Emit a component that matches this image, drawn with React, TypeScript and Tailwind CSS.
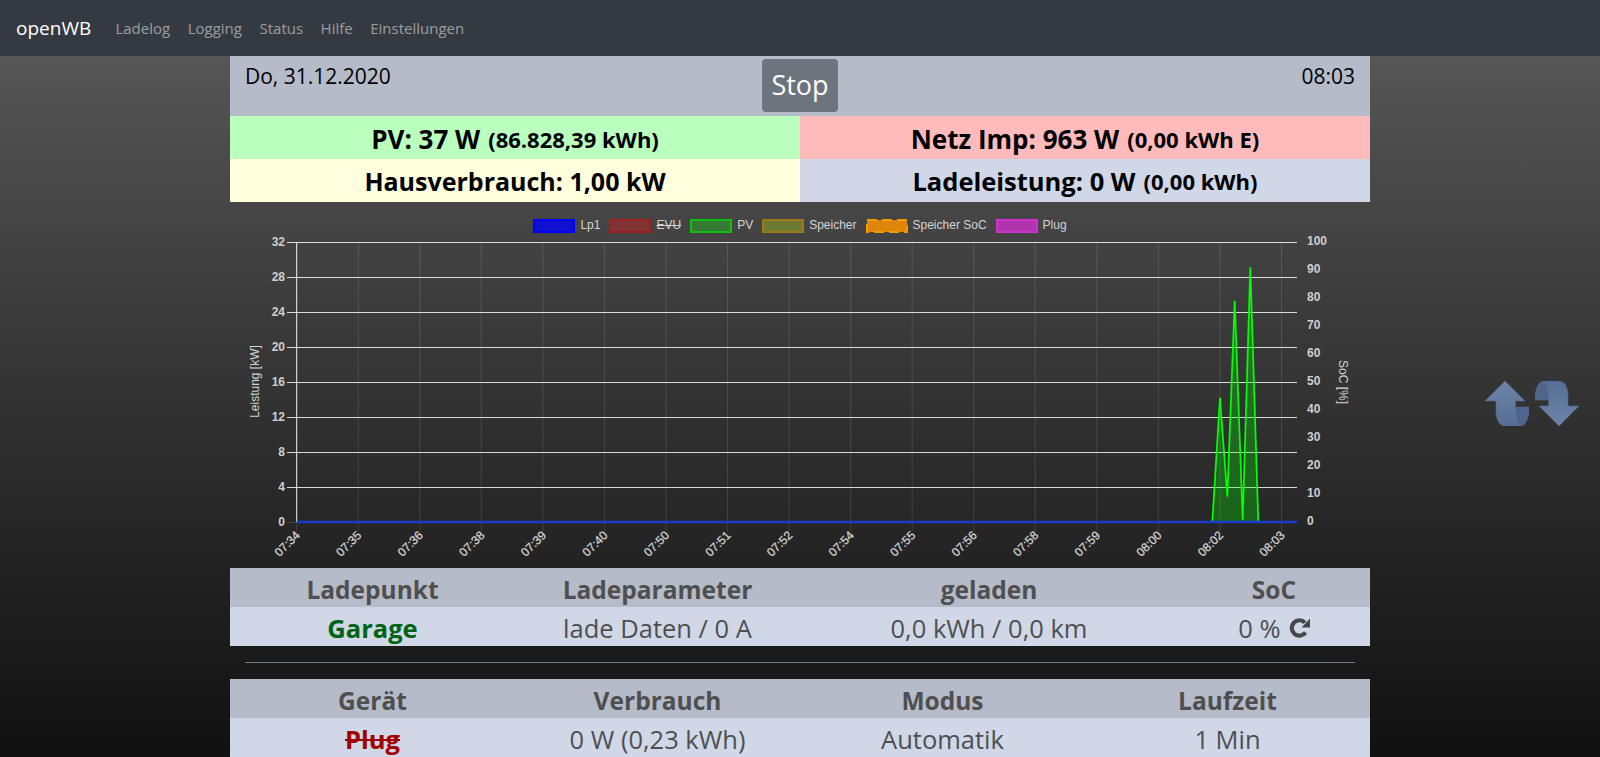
const navLinks = ["Ladelog", "Logging", "Status", "Hilfe", "Einstellungen"];

const legend = [
  { label: "Lp1", box: "bg-[#1010d0] border-[#0000ff]" },
  { label: "EVU", box: "bg-[#803434] border-[#a02020]", off: true },
  { label: "PV", box: "bg-[#347a34] border-[#10c010]" },
  { label: "Speicher", box: "bg-[#6c7a34] border-[#a07818]" },
  { label: "Speicher SoC", dashed: true, box: "" },
  { label: "Plug", box: "bg-[#b034ac] border-[#d030d0]" },
];

const xLabels = ["07:34", "07:35", "07:36", "07:38", "07:39", "07:40", "07:50", "07:51", "07:52", "07:54", "07:55", "07:56", "07:58", "07:59", "08:00", "08:02", "08:03"];
const leftLabels = [32, 28, 24, 20, 16, 12, 8, 4, 0];
const rightLabels = [100, 90, 80, 70, 60, 50, 40, 30, 20, 10, 0];

const pvLine = "1212.3,522 1220,397.7 1227.3,496.7 1234.7,300.7 1242.7,520 1250.3,267.3 1258.3,522";

function Chart() {
  return (
    <svg viewBox="230 233 1140 335" className="block h-[335px] w-full font-['Liberation_Sans',sans-serif]">
      {xLabels.map((t, i) => {
        const x = 296.7 + i * 61.55;
        return (
          <g key={t}>
            <line x1={x} x2={x} y1={242} y2={531} stroke="#ffffff" strokeOpacity={0.12} />
            <text x={x + 4} y={536} textAnchor="end" fontSize={12} fill="#d4d4d4" stroke="#d4d4d4" strokeWidth={0.25} transform={`rotate(-45 ${x + 4} 536)`}>
              {t}
            </text>
          </g>
        );
      })}
      {leftLabels.map((n, i) => {
        const y = 242.5 + i * 35;
        return (
          <g key={n}>
            <line x1={287} x2={1297} y1={y} y2={y} stroke="#ffffff" strokeOpacity={n === 0 ? 0.15 : 0.82} />
            <text x={285} y={y + 3} textAnchor="end" fontSize={12} fontWeight={700} fill="#cfcfcf">
              {n}
            </text>
          </g>
        );
      })}
      {rightLabels.map((n, i) => (
        <text key={n} x={1307} y={245 + i * 28} fontSize={12} fontWeight={700} fill="#cfcfcf">
          {n}
        </text>
      ))}
      <line x1={296.7} x2={296.7} y1={242} y2={522} stroke="#ffffff" strokeOpacity={0.9} />
      <polygon points={pvLine} fill="#00ff00" fillOpacity={0.28} />
      <polyline points={pvLine} fill="none" stroke="#00ff00" strokeWidth={1.75} />
      <line x1={296.7} x2={1297} y1={522} y2={522} stroke="#1a3ccc" strokeWidth={2.5} />
      <text x={259} y={381.5} textAnchor="middle" fontSize={12} fill="#d4d4d4" transform="rotate(-90 259 381.5)">
        Leistung [kW]
      </text>
      <text x={1339} y={382} textAnchor="middle" fontSize={12} fill="#d4d4d4" transform="rotate(90 1339 382)">
        SoC [%]
      </text>
    </svg>
  );
}

function SwitchArrow() {
  return (
    <svg viewBox="0 0 44 45" className="h-[45px] w-[44px]">
      <defs>
        <linearGradient id="arrowFill" x1="0" x2="0" y1="0" y2="1">
          <stop offset="0" stopColor="#6c85a6" />
          <stop offset="1" stopColor="#566e96" />
        </linearGradient>
      </defs>
      <path d="M20 0 L40 20 H30.5 V26 H44 C44 36 41 45 35 45 H20 C14 45 11 38 11 30 V20 H0 Z" fill="url(#arrowFill)" stroke="#54698f" strokeWidth={0.6} />
      <path d="M30.5 26 H44 C44 36 41 45 36 45 C33 44 30.5 36 30.5 26 Z" fill="#4f658c" />
    </svg>
  );
}

function RedoIcon() {
  return (
    <svg viewBox="0 0 21 20" className="h-5 w-[21px] text-[#484848]">
      <path d="M16.6 14.6 A7.7 7.7 0 1 1 16 4.6" fill="none" stroke="currentColor" strokeWidth={4.2} />
      <path d="M21 0.5 V9.5 H12.5 Z" fill="currentColor" />
    </svg>
  );
}

function DashedBox() {
  return (
    <svg viewBox="0 0 42 14" className="h-[14px] w-[42px]">
      <rect x="1" y="1" width="40" height="12" fill="#dc860c" stroke="#f59a00" strokeWidth={2} strokeDasharray="10 5" />
    </svg>
  );
}

function App() {
  return (
    <div className="h-[757px] overflow-hidden bg-[#111] font-['Open_Sans',sans-serif]">
      <nav className="flex h-14 items-center bg-[#353a42] px-4">
        <span className="mr-[15.5px] text-[19px] text-white">openWB</span>
        {navLinks.map((l) => (
          <a key={l} className="px-[8.75px] text-[15px] text-white/50">
            {l}
          </a>
        ))}
      </nav>
      <main className="relative h-[701px] bg-gradient-to-b from-[#565656] to-[#111111]">
        <div className="mx-auto w-[1140px]">
          <div className="grid h-[60px] grid-cols-3 bg-[#b5bbc9] px-[15px] text-[21px] text-black">
            <div className="pt-[5px]">Do, 31.12.2020</div>
            <div className="flex justify-center pt-[3px]">
              <button className="h-[53px] w-[76px] rounded bg-[#6c757d] text-[27px] text-white">Stop</button>
            </div>
            <div className="pt-[5px] text-right">08:03</div>
          </div>
          <div className="grid grid-cols-2 text-center font-bold text-black">
            <div className="flex h-[43px] items-center justify-center gap-2 bg-[#bbffbf] pt-[4px] text-[26px]">
              PV: 37 W <span className="text-[22px]">(86.828,39 kWh)</span>
            </div>
            <div className="flex h-[43px] items-center justify-center gap-2 bg-[#ffbbbb] pt-[4px] text-[26px]">
              Netz Imp: 963 W <span className="text-[22px]">(0,00 kWh E)</span>
            </div>
            <div className="flex h-[43px] items-center justify-center bg-[#ffffdd] pt-[2px] text-[25px]">Hausverbrauch: 1,00 kW</div>
            <div className="flex h-[43px] items-center justify-center gap-2 bg-[#d0d7e7] pt-[2px] text-[25.5px]">
              Ladeleistung: 0 W <span className="text-[22px]">(0,00 kWh)</span>
            </div>
          </div>
          <div className="flex justify-center gap-[9px] pt-[17px]">
            {legend.map((it) => (
              <div key={it.label} className="flex h-[14px] items-center gap-[5px] font-['Liberation_Sans',sans-serif] text-xs text-[#d4d4d4]">
                {it.dashed ? <DashedBox /> : <span className={`h-[14px] w-[42px] border-2 ${it.box}`} />}
                <span className={it.off ? "-translate-y-px line-through" : "-translate-y-px"}>{it.label}</span>
              </div>
            ))}
          </div>
          <Chart />
          <div className="grid grid-cols-[285px_285px_378px_192px] text-center text-[25.5px] text-[#4f4f4f]">
            <div className="flex h-[39px] items-center justify-center bg-[#b5bbc9] pt-[5px] text-[24.5px] font-bold">Ladepunkt</div>
            <div className="flex h-[39px] items-center justify-center bg-[#b5bbc9] pt-[5px] text-[24.5px] font-bold">Ladeparameter</div>
            <div className="flex h-[39px] items-center justify-center bg-[#b5bbc9] pt-[5px] text-[24.5px] font-bold">geladen</div>
            <div className="flex h-[39px] items-center justify-center bg-[#b5bbc9] pt-[5px] text-[24.5px] font-bold">SoC</div>
            <div className="flex h-[39px] items-center justify-center bg-[#d0d7e7] pt-[3px] font-bold text-[#006414]">Garage</div>
            <div className="flex h-[39px] items-center justify-center bg-[#d0d7e7] pt-[3px]">lade Daten / 0 A</div>
            <div className="flex h-[39px] items-center justify-center bg-[#d0d7e7] pt-[3px]">0,0 kWh / 0,0 km</div>
            <div className="flex h-[39px] items-center justify-center gap-[8px] bg-[#d0d7e7] pt-[3px]">
              0 % <RedoIcon />
            </div>
          </div>
          <div className="mx-[15px] mt-4 mb-4 h-px bg-[#6f7783]" />
          <div className="grid grid-cols-4 text-center text-[25.5px] text-[#4f4f4f]">
            <div className="flex h-[39px] items-center justify-center bg-[#b5bbc9] pt-[5px] text-[24.5px] font-bold">Gerät</div>
            <div className="flex h-[39px] items-center justify-center bg-[#b5bbc9] pt-[5px] text-[24.5px] font-bold">Verbrauch</div>
            <div className="flex h-[39px] items-center justify-center bg-[#b5bbc9] pt-[5px] text-[24.5px] font-bold">Modus</div>
            <div className="flex h-[39px] items-center justify-center bg-[#b5bbc9] pt-[5px] text-[24.5px] font-bold">Laufzeit</div>
            <div className="flex h-[39px] items-center justify-center bg-[#d0d7e7] pt-[3px] font-bold text-[#a00000] line-through">Plug</div>
            <div className="flex h-[39px] items-center justify-center bg-[#d0d7e7] pt-[3px]">0 W (0,23 kWh)</div>
            <div className="flex h-[39px] items-center justify-center bg-[#d0d7e7] pt-[3px]">Automatik</div>
            <div className="flex h-[39px] items-center justify-center bg-[#d0d7e7] pt-[3px]">1 Min</div>
          </div>
        </div>
        <div className="absolute top-[325px] left-[1485px] flex gap-[6px]">
          <SwitchArrow />
          <div className="rotate-180">
            <SwitchArrow />
          </div>
        </div>
      </main>
    </div>
  );
}

export default App;
